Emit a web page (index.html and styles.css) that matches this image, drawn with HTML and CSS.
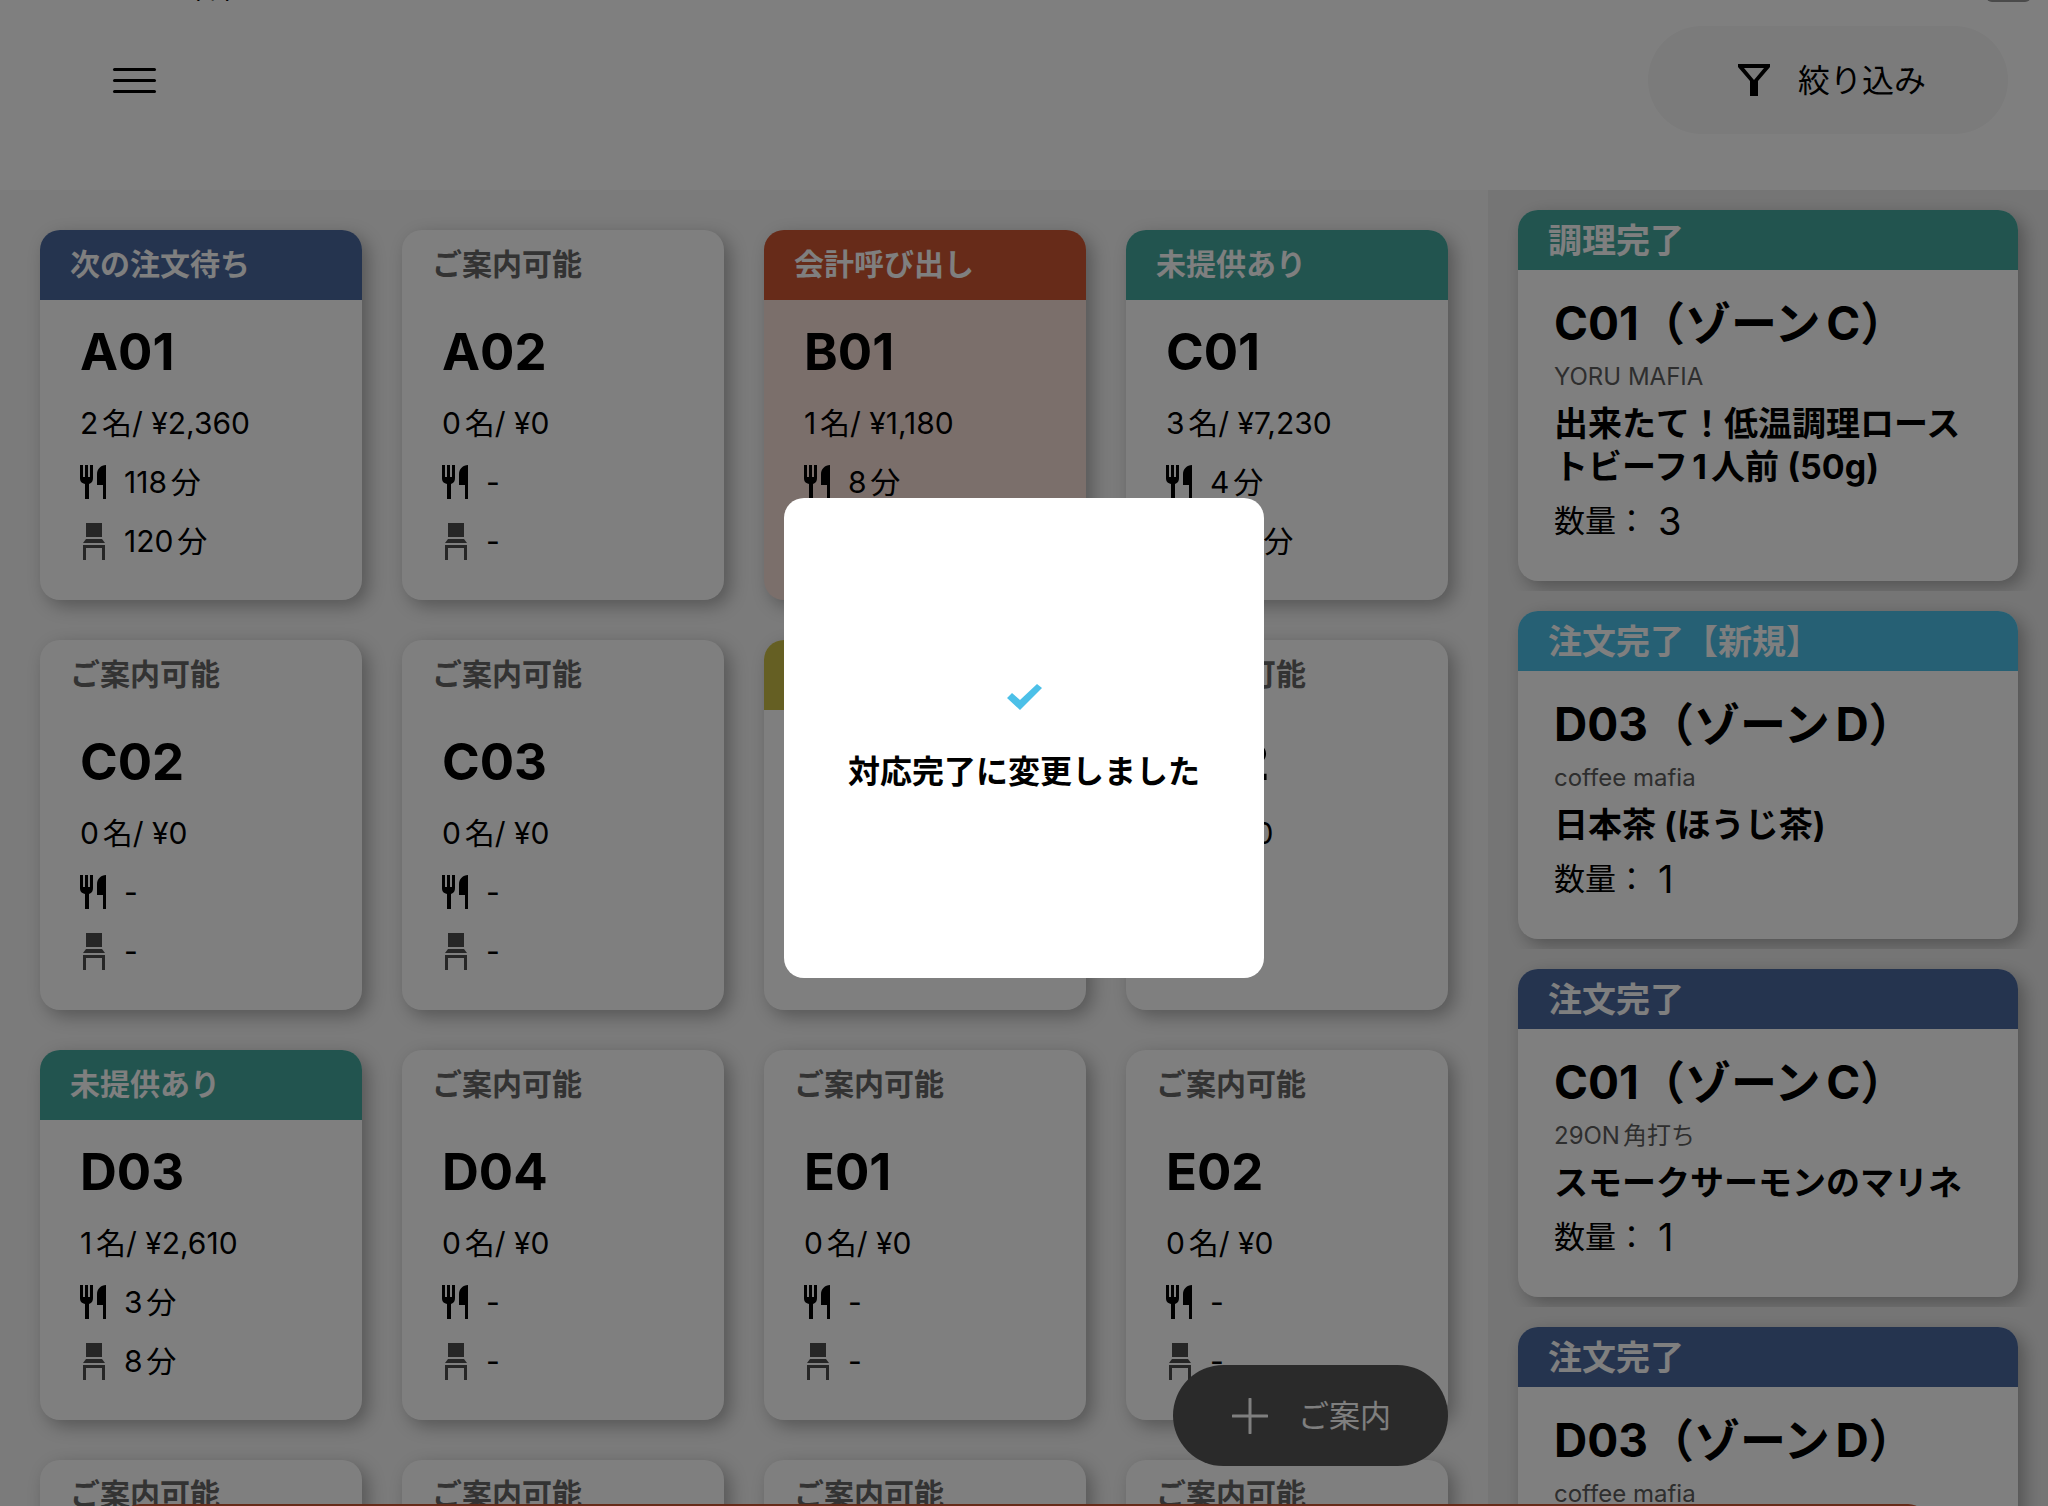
FILE: index.html
```html
<!DOCTYPE html>
<html lang="ja">
<head>
  <meta charset="UTF-8" />
  <meta name="viewport" content="width=device-width, initial-scale=1" />
  <title>テーブル一覧</title>
  <link rel="stylesheet" href="styles.css">
</head>
<body>

  <!-- Icons -->
  <svg class="icon-defs" aria-hidden="true">
    <symbol id="icon-meal" viewBox="0 0 26 34">
      <path d="M0 0h3v12h2V0h3v12h2V0h3v13c0 3-1 5-4 6v15H5V19c-4-1-5-3-5-6z" />
      <path d="M26 0v34h-3V20h-6V9c0-5 4-9 9-9z" />
    </symbol>
    <symbol id="icon-seat" viewBox="0 0 22 37">
      <path d="M3 0h16v14H3zM3 16h16l3 4H0zM0 22h22v15h-3V25H3v12H0z" />
    </symbol>
  </svg>

  <!-- Header -->
  <header class="header">
    <div class="status-bar">
      <span class="status-date">(木)</span>
      <span class="status-battery"></span>
    </div>
    <div class="toolbar">
      <button class="menu-btn" aria-label="メニュー">
        <span></span>
        <span></span>
        <span></span>
      </button>
      <button class="filter-btn">
        <svg width="32" height="32" viewBox="0 0 32 32"><path fill-rule="evenodd" d="M0 0h32v3L20 17v15h-8V17L0 3zM6 4l10 12L26 4z" /></svg>
        <span>絞り込み</span>
      </button>
    </div>
  </header>

  <div class="content">
    <!-- Tables -->
    <main class="tables">
      <div class="table-card waiting">
        <div class="table-status">次の注文待ち</div>
        <div class="table-body">
          <h2>A01</h2>
          <p>2名/ ¥2,360</p>
          <p><svg class="meal"><use href="#icon-meal" /></svg>118分</p>
          <p><svg class="seat"><use href="#icon-seat" /></svg>120分</p>
        </div>
      </div>
      <div class="table-card">
        <div class="table-status">ご案内可能</div>
        <div class="table-body">
          <h2>A02</h2>
          <p>0名/ ¥0</p>
          <p><svg class="meal"><use href="#icon-meal" /></svg>-</p>
          <p><svg class="seat"><use href="#icon-seat" /></svg>-</p>
        </div>
      </div>
      <div class="table-card checkout">
        <div class="table-status">会計呼び出し</div>
        <div class="table-body">
          <h2>B01</h2>
          <p>1名/ ¥1,180</p>
          <p><svg class="meal"><use href="#icon-meal" /></svg>8分</p>
          <p><svg class="seat"><use href="#icon-seat" /></svg>9分</p>
        </div>
      </div>
      <div class="table-card unserved">
        <div class="table-status">未提供あり</div>
        <div class="table-body">
          <h2>C01</h2>
          <p>3名/ ¥7,230</p>
          <p><svg class="meal"><use href="#icon-meal" /></svg>4分</p>
          <p><svg class="seat"><use href="#icon-seat" /></svg>120分</p>
        </div>
      </div>

      <div class="table-card">
        <div class="table-status">ご案内可能</div>
        <div class="table-body">
          <h2>C02</h2>
          <p>0名/ ¥0</p>
          <p><svg class="meal"><use href="#icon-meal" /></svg>-</p>
          <p><svg class="seat"><use href="#icon-seat" /></svg>-</p>
        </div>
      </div>
      <div class="table-card">
        <div class="table-status">ご案内可能</div>
        <div class="table-body">
          <h2>C03</h2>
          <p>0名/ ¥0</p>
          <p><svg class="meal"><use href="#icon-meal" /></svg>-</p>
          <p><svg class="seat"><use href="#icon-seat" /></svg>-</p>
        </div>
      </div>
      <div class="table-card calling">
        <div class="table-status">呼び出し</div>
        <div class="table-body">
          <h2>D01</h2>
          <p>1名/ ¥0</p>
          <p><svg class="meal"><use href="#icon-meal" /></svg>-</p>
          <p><svg class="seat"><use href="#icon-seat" /></svg>-</p>
        </div>
      </div>
      <div class="table-card">
        <div class="table-status">ご案内可能</div>
        <div class="table-body">
          <h2>D02</h2>
          <p>0名/ ¥0</p>
          <p><svg class="meal"><use href="#icon-meal" /></svg>-</p>
          <p><svg class="seat"><use href="#icon-seat" /></svg>-</p>
        </div>
      </div>

      <div class="table-card unserved">
        <div class="table-status">未提供あり</div>
        <div class="table-body">
          <h2>D03</h2>
          <p>1名/ ¥2,610</p>
          <p><svg class="meal"><use href="#icon-meal" /></svg>3分</p>
          <p><svg class="seat"><use href="#icon-seat" /></svg>8分</p>
        </div>
      </div>
      <div class="table-card">
        <div class="table-status">ご案内可能</div>
        <div class="table-body">
          <h2>D04</h2>
          <p>0名/ ¥0</p>
          <p><svg class="meal"><use href="#icon-meal" /></svg>-</p>
          <p><svg class="seat"><use href="#icon-seat" /></svg>-</p>
        </div>
      </div>
      <div class="table-card">
        <div class="table-status">ご案内可能</div>
        <div class="table-body">
          <h2>E01</h2>
          <p>0名/ ¥0</p>
          <p><svg class="meal"><use href="#icon-meal" /></svg>-</p>
          <p><svg class="seat"><use href="#icon-seat" /></svg>-</p>
        </div>
      </div>
      <div class="table-card">
        <div class="table-status">ご案内可能</div>
        <div class="table-body">
          <h2>E02</h2>
          <p>0名/ ¥0</p>
          <p><svg class="meal"><use href="#icon-meal" /></svg>-</p>
          <p><svg class="seat"><use href="#icon-seat" /></svg>-</p>
        </div>
      </div>

      <div class="table-card">
        <div class="table-status">ご案内可能</div>
      </div>
      <div class="table-card">
        <div class="table-status">ご案内可能</div>
      </div>
      <div class="table-card">
        <div class="table-status">ご案内可能</div>
      </div>
      <div class="table-card">
        <div class="table-status">ご案内可能</div>
      </div>

      <button class="guide-btn">
        <svg width="36" height="36" viewBox="0 0 36 36"><path d="M18 1v34M1 18h34" /></svg>
        <span>ご案内</span>
      </button>
    </main>

    <!-- Notifications -->
    <aside class="notices">
      <div class="notice">
        <div class="notice-card cooked">
          <div class="notice-status">調理完了</div>
          <div class="notice-body">
            <h3>C01（ゾーンC）</h3>
            <p class="shop">YORU MAFIA</p>
            <p class="item">出来たて！低温調理ローストビーフ1人前 (50g)</p>
            <p class="qty">数量：<span>3</span></p>
          </div>
        </div>
      </div>
      <div class="notice">
        <div class="notice-card ordered-new">
          <div class="notice-status">注文完了【新規】</div>
          <div class="notice-body">
            <h3>D03（ゾーンD）</h3>
            <p class="shop">coffee mafia</p>
            <p class="item">日本茶 (ほうじ茶)</p>
            <p class="qty">数量：<span>1</span></p>
          </div>
        </div>
      </div>
      <div class="notice">
        <div class="notice-card ordered">
          <div class="notice-status">注文完了</div>
          <div class="notice-body">
            <h3>C01（ゾーンC）</h3>
            <p class="shop">29ON角打ち</p>
            <p class="item">スモークサーモンのマリネ</p>
            <p class="qty">数量：<span>1</span></p>
          </div>
        </div>
      </div>
      <div class="notice">
        <div class="notice-card ordered">
          <div class="notice-status">注文完了</div>
          <div class="notice-body">
            <h3>D03（ゾーンD）</h3>
            <p class="shop">coffee mafia</p>
          </div>
        </div>
      </div>
    </aside>
  </div>

  <div class="snackbar"></div>

  <!-- Completion dialog -->
  <div class="overlay">
    <div class="dialog" role="dialog">
      <svg width="35" height="26" viewBox="0 0 35 26"><path d="M0 14l5-5 8 7L30 0l5 4-22 22z" /></svg>
      <p>対応完了に変更しました</p>
    </div>
  </div>

</body>
</html>
```
FILE: styles.css
```css
* {
  margin: 0;
  padding: 0;
  box-sizing: border-box;
}

body {
  font-family: Inter, "Noto Sans CJK JP", sans-serif;
  color: #000;
  background-color: #fff;
  display: flex;
  flex-direction: column;
  height: 100vh;
  overflow: hidden;
  text-autospace: normal;
}

button {
  font: inherit;
  border: none;
  cursor: pointer;
}

.icon-defs {
  position: absolute;
  width: 0;
  height: 0;
}

/* Header */
.header {
  flex: none;
  height: 190px;
}

.status-bar {
  display: flex;
  align-items: flex-end;
  justify-content: space-between;
  height: 2px;
  padding: 0 17px 0 192px;
  overflow: hidden;
}

.status-date {
  font-size: 24px;
  line-height: 25px;
}

.status-battery {
  width: 45px;
  height: 20px;
  border-radius: 6px;
  background-color: #959595;
}

.toolbar {
  display: flex;
  align-items: center;
  justify-content: space-between;
  padding: 24px 40px 0 100px;
}

.menu-btn {
  display: flex;
  flex-direction: column;
  gap: 8px;
  padding: 12px 13px;
  background: none;
}

.menu-btn span {
  width: 43px;
  height: 3px;
  border-radius: 2px;
  background-color: #000;
}

.filter-btn {
  display: flex;
  align-items: center;
  justify-content: center;
  gap: 28px;
  width: 360px;
  height: 108px;
  padding-left: 8px;
  border-radius: 54px;
  font-size: 32px;
  background-color: #f6f6f6;
}

.filter-btn span,
.guide-btn span {
  padding-bottom: 4px;
}

/* Layout */
.content {
  flex: 1;
  display: flex;
  min-height: 0;
}

/* Tables */
.tables {
  position: relative;
  flex: 1;
  display: grid;
  grid-template-columns: repeat(4, 1fr);
  align-content: start;
  gap: 40px;
  padding: 40px;
  background-color: #f6f6f6;
  overflow: hidden;
}

.table-card {
  border-radius: 20px;
  background-color: #fff;
  box-shadow: 6px 6px 18px rgba(0, 0, 0, 0.3);
}

.table-status {
  height: 70px;
  padding-left: 30px;
  border-radius: 20px 20px 0 0;
  font-size: 30px;
  font-weight: bold;
  line-height: 68px;
  color: #666;
}

.table-body {
  display: flex;
  flex-direction: column;
  gap: 19px;
  padding: 20px 40px 39px;
}

.table-body h2 {
  font-size: 51px;
  line-height: 64px;
}

.table-body p {
  display: flex;
  align-items: center;
  font-size: 30px;
  line-height: 40px;
  white-space: pre;
}

.meal {
  width: 26px;
  height: 34px;
  margin-right: 18px;
}

.seat {
  width: 28px;
  height: 37px;
  margin-right: 16px;
  fill: #4c4c4c;
}

.waiting .table-status,
.ordered .notice-status {
  color: #fff;
  background-color: #4a689e;
}

.unserved .table-status,
.cooked .notice-status {
  color: #fff;
  background-color: #44a89e;
}

.checkout {
  background-color: #f6ded6;
}

.checkout .table-status {
  color: #fff;
  background-color: #ce5632;
}

.calling .table-status {
  color: #fff;
  background-color: #cabe46;
}

.guide-btn {
  position: absolute;
  right: 40px;
  bottom: 40px;
  display: flex;
  align-items: center;
  justify-content: center;
  gap: 30px;
  width: 275px;
  height: 101px;
  padding-left: 2px;
  border-radius: 51px;
  font-size: 31px;
  color: #fff;
  background-color: #545454;
}

.guide-btn path {
  stroke: #fff;
  stroke-width: 3;
  stroke-linecap: round;
}

/* Notifications */
.notices {
  flex: none;
  width: 560px;
  background-color: #ebebeb;
  overflow: hidden;
}

.notice {
  padding: 20px 30px 10px;
  overflow: hidden;
}

.notice-card {
  border-radius: 20px;
  background-color: #fff;
  box-shadow: 6px 6px 18px rgba(0, 0, 0, 0.3);
}

.notice-status {
  height: 60px;
  padding-left: 30px;
  border-radius: 20px 20px 0 0;
  font-size: 34px;
  font-weight: bold;
  line-height: 62px;
}

.ordered-new .notice-status {
  color: #fff;
  background-color: #4cc0e8;
}

.cooked .notice-status,
.ordered .notice-status {
  color: #fff;
}

.notice-body {
  padding: 25px 36px 37px;
}

.notice-body h3 {
  font-size: 46px;
  line-height: 56px;
  white-space: nowrap;
}

.shop {
  margin-top: 11px;
  font-size: 24px;
  line-height: 30px;
  color: #5c5c5c;
}

.item {
  margin-top: 10px;
  font-size: 34px;
  font-weight: bold;
  line-height: 43px;
}

.qty {
  display: flex;
  align-items: center;
  margin-top: 10px;
  font-size: 31px;
  line-height: 46px;
}

.qty span {
  margin-left: 11px;
  font-size: 38px;
}

/* Top edge of the alert that slides in from below */
.snackbar {
  position: fixed;
  left: 120px;
  right: 120px;
  bottom: -58px;
  height: 60px;
  border-radius: 20px;
  background-color: #ce5632;
}

/* Dialog */
.overlay {
  position: fixed;
  inset: 0;
  display: flex;
  align-items: center;
  justify-content: center;
  padding-bottom: 30px;
  background-color: rgba(0, 0, 0, 0.5);
}

.dialog {
  display: flex;
  flex-direction: column;
  align-items: center;
  justify-content: center;
  gap: 38px;
  width: 480px;
  height: 480px;
  padding-top: 4px;
  border-radius: 20px;
  background-color: #fff;
}

.dialog path {
  fill: #4cc0e8;
}

.dialog p {
  font-size: 32px;
  font-weight: bold;
  line-height: 48px;
}
```
